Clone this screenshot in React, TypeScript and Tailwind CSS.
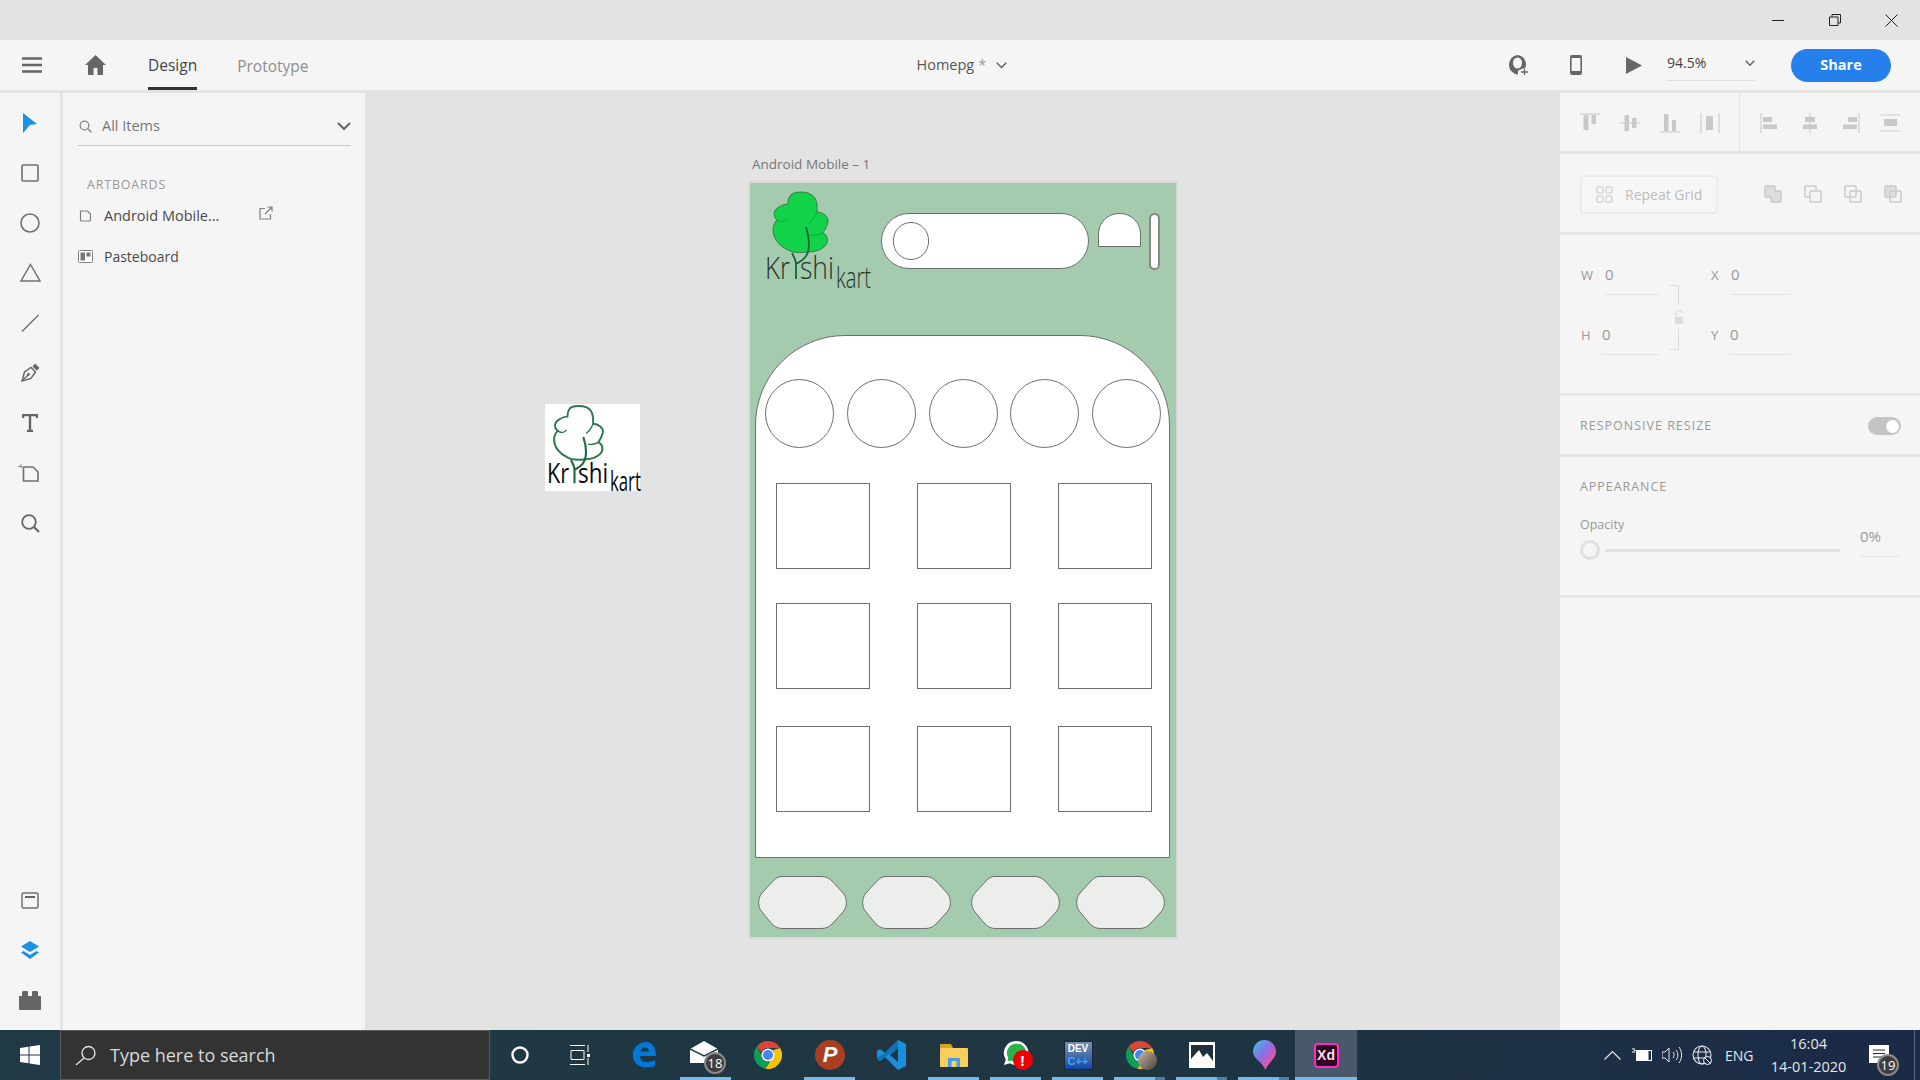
import type { ReactNode } from 'react'

function Logo({ filled, className }: { filled: boolean; className: string }) {
  const fill = filled ? '#12d24a' : '#ffffff'
  const stroke = filled ? '#2f6b3c' : '#2c7a4e'
  const ink = filled ? '#26352b' : '#0b0b0b'
  return (
    <svg viewBox="0 0 106 97" className={`overflow-visible ${className}`}>
      <path
        d="M25 4C27-1 44-2 49 5C53 10 52 16 52 20C58 20 64 25 63 30C62 34 60 38 58 41C63 43 64 50 60 54C55 59 48 60 43 60C36 61 28 61 23 58C14 54 8 46 8 38C8 33 10 30 12 28C7 24 9 17 14 15C17 13 20 12 23 12C23 9 23 7 25 4Z"
        fill={fill}
        stroke={stroke}
        strokeWidth={filled ? 0.8 : 2.2}
      />
      <path d="M12 28C16 31 20 30 22 27M52 20C50 25 47 29 44 31M58 41C54 43 50 44 46 43" fill="none" stroke={stroke} strokeWidth={filled ? 0.5 : 1.6} />
      <path d="M31 87V72C31 68 29 65 27 61M31 72C36 69 44 66 44 52C44 46 43 41 41 35" fill="none" stroke={filled ? '#12653a' : '#1e6b40'} strokeWidth={filled ? 1.8 : 2.4} />
      <text x="0" y="87" fontFamily="'Open Sans', sans-serif" fontWeight={filled ? 300 : 400} fontSize="31" fill={ink} textLength="25" lengthAdjust="spacingAndGlyphs">Kr</text>
      <text x="35" y="87" fontFamily="'Open Sans', sans-serif" fontWeight={filled ? 300 : 400} fontSize="31" fill={ink} textLength="34" lengthAdjust="spacingAndGlyphs">shi</text>
      <text x="71" y="96" fontFamily="'Open Sans', sans-serif" fontWeight={filled ? 300 : 400} fontSize="30" fill={ink} textLength="35" lengthAdjust="spacingAndGlyphs">kart</text>
    </svg>
  )
}

function Hex({ className }: { className: string }) {
  return (
    <svg viewBox="0 0 89 53" className={`w-[89px] h-[53px] overflow-visible ${className}`}>
      <path
        d="M24 .5H63C68 .5 71 2 74 5L85 17C89.5 22 89.5 31 85 36L74 48C71 51 68 52.5 63 52.5H25C20 52.5 17 51 14 48L4 36C-.5 31-.5 22 4 17L15 5C18 2 20 .5 24 .5Z"
        fill="#eceeec"
        stroke="#6e6e6e"
        strokeWidth="1"
      />
    </svg>
  )
}

function Artboard() {
  return (
    <div className="absolute left-[385px] top-[90px] w-[426px] h-[754px] bg-[#a5cbae] shadow-[0_0_0_2px_#d9d9d9]">
      <Logo filled className="absolute left-[15px] top-[9px] w-[106px] h-[97px]" />
      <div className="flex items-start pl-[131px] pt-[30px]">
        <div className="w-[208px] h-[56px] rounded-full bg-white border border-[#6e6e6e] flex items-center pl-[11px]">
          <div className="w-[36px] h-[38px] rounded-full border border-[#6e6e6e]" />
        </div>
        <div className="ml-[9px] w-[43px] h-[34px] rounded-t-[21px] bg-white border border-[#6e6e6e]" />
        <div className="ml-[8px] w-[11px] h-[57px] rounded-full bg-white border-2 border-[#888]" />
      </div>
      <div className="ml-[5px] mt-[65px] w-[415px] h-[523px] bg-white border border-[#6e6e6e] rounded-t-[90px] pt-[43px]">
        <div className="flex justify-between pl-[9px] pr-[8px]">
          <div className="w-[69px] h-[69px] rounded-full border border-[#6e6e6e]" />
          <div className="w-[69px] h-[69px] rounded-full border border-[#6e6e6e]" />
          <div className="w-[69px] h-[69px] rounded-full border border-[#6e6e6e]" />
          <div className="w-[69px] h-[69px] rounded-full border border-[#6e6e6e]" />
          <div className="w-[69px] h-[69px] rounded-full border border-[#6e6e6e]" />
        </div>
        <div className="grid grid-cols-[94px_94px_94px] gap-x-[47px] gap-y-[34px] ml-[20px] mt-[35px]">
          {Array.from({ length: 9 }).map((_, i) => (
            <div key={i} className={`h-[86px] border border-[#6e6e6e] ${i >= 6 ? 'mt-[3px]' : ''}`} />
          ))}
        </div>
      </div>
      <div className="flex pt-[18px] pl-[8px]">
        <Hex className="" />
        <Hex className="ml-[15px]" />
        <Hex className="ml-[20px]" />
        <Hex className="ml-[16px]" />
      </div>
    </div>
  )
}

function ToolIcon({ children }: { children: ReactNode }) {
  return <div className="h-[50px] flex items-center justify-center">{children}</div>
}

function LeftToolbar() {
  return (
    <div className="w-[63px] shrink-0 border-r-[3px] border-[#e3e3e3] bg-[#f5f5f5] flex flex-col justify-between pt-[5px] pb-[5px]">
      <div>
        <ToolIcon>
          <svg width="16" height="20" viewBox="0 0 16 20"><path d="M1 0L15 11L8 12L1 20Z" fill="#1a90e8" /></svg>
        </ToolIcon>
        <ToolIcon>
          <svg width="18" height="18" viewBox="0 0 18 18"><rect x="1" y="1" width="16" height="16" rx="1" fill="none" stroke="#707070" strokeWidth="1.6" /></svg>
        </ToolIcon>
        <ToolIcon>
          <svg width="20" height="20" viewBox="0 0 20 20"><circle cx="10" cy="10" r="9" fill="none" stroke="#707070" strokeWidth="1.6" /></svg>
        </ToolIcon>
        <ToolIcon>
          <svg width="21" height="19" viewBox="0 0 21 19" className="-mt-[1px]"><path d="M10.5 1.5L20 18H1Z" fill="none" stroke="#707070" strokeWidth="1.5" /></svg>
        </ToolIcon>
        <ToolIcon>
          <svg width="18" height="18" viewBox="0 0 18 18"><path d="M1 17.5L17.5 1" fill="none" stroke="#707070" strokeWidth="1.4" /></svg>
        </ToolIcon>
        <ToolIcon>
          <svg width="19" height="19" viewBox="0 0 19 19" className="-mt-[1px]">
            <path d="M1 18L3.5 9L10 4.5L14.5 9L10 15.5Z" fill="none" stroke="#666" strokeWidth="1.4" />
            <path d="M1.5 17.5L7 12" fill="none" stroke="#666" strokeWidth="1.2" />
            <path d="M11.5 3.5L14 0.5L18.5 5L15.5 7.5Z" fill="#666" />
            <circle cx="7.5" cy="11.5" r="1.4" fill="#666" />
          </svg>
        </ToolIcon>
        <ToolIcon>
          <svg width="16" height="18" viewBox="0 0 16 18"><path d="M1 4V1H15V4M8 1V17M5 17H11" fill="none" stroke="#666" strokeWidth="2.4" /></svg>
        </ToolIcon>
        <ToolIcon>
          <svg width="21" height="18" viewBox="0 0 21 18" className="-ml-[4px]">
            <path d="M0 2.5H4M3 0V4" fill="none" stroke="#888" strokeWidth="1" />
            <path d="M5.5 3H15L20 8V17H5.5Z" fill="none" stroke="#707070" strokeWidth="1.6" />
          </svg>
        </ToolIcon>
        <ToolIcon>
          <svg width="19" height="19" viewBox="0 0 19 19">
            <circle cx="8" cy="8" r="6.8" fill="none" stroke="#666" strokeWidth="1.8" />
            <path d="M13 13L18 18" stroke="#666" strokeWidth="2.2" />
          </svg>
        </ToolIcon>
      </div>
      <div>
        <ToolIcon>
          <svg width="18" height="17" viewBox="0 0 18 17">
            <rect x="1" y="1" width="16" height="15" rx="1.5" fill="none" stroke="#707070" strokeWidth="1.5" />
            <rect x="4" y="4" width="10" height="2" fill="#666" />
          </svg>
        </ToolIcon>
        <ToolIcon>
          <svg width="18" height="18" viewBox="0 0 18 18">
            <path d="M9 0L18 5.5L9 11L0 5.5Z" fill="#1a90e8" />
            <path d="M2.5 10L9 14L15.5 10L18 11.5L9 18L0 11.5Z" fill="#1a90e8" />
          </svg>
        </ToolIcon>
        <ToolIcon>
          <svg width="22" height="19" viewBox="0 0 22 19">
            <path d="M3 5V1.5C3 .7 3.7 0 4.5 0H8C8.8 0 9 .7 9 1.5V5H13V1.5C13 .7 13.5 0 14 0H17.5C18.3 0 19 .7 19 1.5V5H21C21.6 5 22 5.4 22 6V18C22 18.6 21.6 19 21 19H1C.4 19 0 18.6 0 18V6C0 5.4 .4 5 1 5Z" fill="#666" />
          </svg>
        </ToolIcon>
      </div>
    </div>
  )
}

function LeftPanel() {
  return (
    <div className="w-[302px] shrink-0 bg-[#f5f5f5] pl-[15px] pr-[14px]">
      <div className="mt-[15px] h-[38px] border-b border-[#c8c8c8] flex items-center">
        <svg width="13" height="13" viewBox="0 0 13 13" className="ml-[1px]">
          <circle cx="5.5" cy="5.5" r="4.3" fill="none" stroke="#8a8a8a" strokeWidth="1.3" />
          <path d="M8.8 8.8L12.3 12.3" stroke="#8a8a8a" strokeWidth="1.6" />
        </svg>
        <span className="ml-[10px] -mt-[2px] text-[14.5px] text-[#777]">All Items</span>
        <svg width="14" height="9" viewBox="0 0 14 9" className="ml-auto">
          <path d="M1 1L7 7L13 1" fill="none" stroke="#666" strokeWidth="2" />
        </svg>
      </div>
      <div className="mt-[31px] pl-[9px] h-[16px] leading-[16px] text-[12.5px] tracking-[0.8px] text-[#9a9a9a]">ARTBOARDS</div>
      <div className="mt-[13px] h-[20px] flex items-center">
        <svg width="13" height="12" viewBox="0 0 13 12" className="ml-[1px]">
          <path d="M1.5 1H8.5L11.5 4V10A1 1 0 0 1 10.5 11H2.5A1 1 0 0 1 1.5 10Z" fill="none" stroke="#808080" strokeWidth="1.2" />
        </svg>
        <span className="ml-[12px] text-[14.5px] text-[#4a4a4a] w-[155px]">Android Mobile...</span>
        <svg width="14" height="14" viewBox="0 0 14 14" className="-mt-[6px]">
          <path d="M6 2.5H1V13H11.5V8M6 8L13 1M8.5 1H13V5.5" fill="none" stroke="#808080" strokeWidth="1.2" />
        </svg>
      </div>
      <div className="mt-[20px] h-[20px] flex items-center">
        <svg width="15" height="13" viewBox="0 0 15 13">
          <rect x=".5" y=".5" width="14" height="12" rx="1" fill="#fff" stroke="#808080" />
          <rect x="2.5" y="2.5" width="4.5" height="8" fill="#777" />
          <rect x="8.5" y="2.5" width="4" height="4" fill="#777" />
        </svg>
        <span className="ml-[11px] text-[14px] text-[#4a4a4a]">Pasteboard</span>
      </div>
    </div>
  )
}

function AlignIcon({ d, bars }: { d: string; bars: string }) {
  return (
    <svg width="20" height="20" viewBox="0 0 20 20">
      <path d={d} fill="none" stroke="#cfcfcf" strokeWidth="1.2" />
      <path d={bars} fill="#c9c9c9" />
    </svg>
  )
}

function BoolIcon({ mode }: { mode: number }) {
  return (
    <svg width="18" height="18" viewBox="0 0 18 18">
      {mode === 0 ? (
        <path d="M2 1H10A1 1 0 0 1 11 2V6H16A1 1 0 0 1 17 7V16A1 1 0 0 1 16 17H8A1 1 0 0 1 7 16V12H2A1 1 0 0 1 1 11V2A1 1 0 0 1 2 1Z" fill="#dedede" stroke="#cacaca" strokeWidth="1.5" />
      ) : (
        <g fill="none" stroke="#cacaca" strokeWidth="1.5">
          <rect x="1" y="1" width="11" height="11" rx="1" fill={mode === 3 ? '#dedede' : 'none'} />
          <rect x="6" y="6" width="11" height="11" rx="1" fill={mode === 1 ? '#f5f5f5' : 'none'} />
        </g>
      )}
    </svg>
  )
}

function Field({ label, labelWidth, value, width }: { label: string; labelWidth: string; value: string; width: string }) {
  return (
    <div className="flex h-[33px]">
      <span className={`${labelWidth} text-[13px] text-[#999] leading-[26px]`}>{label}</span>
      <span className={`${width} border-b border-[#e3e3e3] text-[15px] text-[#999] leading-[24px]`}>{value}</span>
    </div>
  )
}

function RightPanel() {
  return (
    <div className="w-[360px] shrink-0 bg-[#f5f5f5]">
      <div className="h-[61px] border-b-[3px] border-[#e6e6e6] flex">
        <div className="w-[180px] h-full border-r border-[#e3e3e3] pl-[20px] pt-[1px] flex items-center gap-[20px]">
          <AlignIcon d="M0 1H20" bars="M3.5 2H8.5V17H3.5ZM11.5 2H16V11H11.5Z" />
          <AlignIcon d="M0 10H20" bars="M4.5 2H9V18H4.5ZM12 5H16.5V15H12Z" />
          <AlignIcon d="M0 19H20" bars="M4 1H8.5V18H4ZM12 7H16V18H12Z" />
          <AlignIcon d="M1 0V20M19 0V20" bars="M6 3H13V17H6Z" />
        </div>
        <div className="pl-[20px] pt-[1px] flex items-center gap-[20px]">
          <AlignIcon d="M1 0V20" bars="M3 4H12V9H3ZM3 11.5H17V16H3Z" />
          <AlignIcon d="M10 0V20" bars="M5 4H15V9H5ZM3 11.5H17V16H3Z" />
          <AlignIcon d="M19 0V20" bars="M8 4H17V9H8ZM3 11.5H17V16H3Z" />
          <AlignIcon d="M0 2H20M0 18H20" bars="M4 6H17V13H4Z" />
        </div>
      </div>
      <div className="h-[81px] border-b-[3px] border-[#e6e6e6] flex items-center pl-[20px] pt-[2px]">
        <div className="w-[138px] h-[39px] rounded-[4px] border-2 border-[#ececec] bg-[#f7f7f7] flex items-center pl-[14px]">
          <svg width="17" height="17" viewBox="0 0 17 17">
            <g fill="none" stroke="#d6d6d6" strokeWidth="1.5">
              <rect x="1" y="1" width="6" height="6" rx="1" />
              <rect x="10" y="1" width="6" height="6" rx="1" />
              <rect x="1" y="10" width="6" height="6" rx="1" />
              <rect x="10" y="10" width="6" height="6" rx="1" />
            </g>
          </svg>
          <span className="ml-[12px] text-[14px] text-[#bcbcbc]">Repeat Grid</span>
        </div>
        <div className="ml-[46px] flex gap-[22px]">
          <BoolIcon mode={0} />
          <BoolIcon mode={1} />
          <BoolIcon mode={2} />
          <BoolIcon mode={3} />
        </div>
      </div>
      <div className="h-[161px] border-b-[3px] border-[#e6e6e6] pl-[21px] pt-[27px] flex">
        <div className="w-[79px] flex flex-col gap-[27px]">
          <Field label="W" labelWidth="w-[24px]" value="0" width="w-[55px]" />
          <Field label="H" labelWidth="w-[21px]" value="0" width="w-[58px]" />
        </div>
        <svg width="20" height="66" viewBox="0 0 20 66" className="ml-[8px] mt-[23px]">
          <path d="M1 .5H10.5V20M10.500 44V64.5H1" fill="none" stroke="#dcdcdc" strokeWidth="1.2" />
          <path d="M8 32V29A3 3 0 0 1 14 28" fill="none" stroke="#dcdcdc" strokeWidth="1.2" />
          <rect x="7" y="32" width="8" height="7" rx="1" fill="#dcdcdc" />
        </svg>
        <div className="ml-[23px] flex flex-col gap-[27px]">
          <Field label="X" labelWidth="w-[20px]" value="0" width="w-[59px]" />
          <Field label="Y" labelWidth="w-[19px]" value="0" width="w-[60px]" />
        </div>
      </div>
      <div className="h-[61px] border-b-[3px] border-[#e6e6e6] flex items-center justify-between pl-[20px] pr-[19px] pt-[2px]">
        <span className="text-[12.5px] tracking-[1px] text-[#999]">RESPONSIVE RESIZE</span>
        <div className="w-[33px] h-[18px] rounded-full bg-[#c4c4c4] flex items-center justify-end pr-[2px]">
          <div className="w-[13px] h-[13px] rounded-full bg-white" />
        </div>
      </div>
      <div className="h-[141px] border-b-[3px] border-[#e6e6e6] pl-[20px] pt-[22px]">
        <div className="h-[16px] leading-[16px] text-[12.5px] tracking-[0.95px] text-[#999]">APPEARANCE</div>
        <div className="flex mt-[22px]">
          <div className="w-[260px]">
            <div className="h-[16px] leading-[16px] text-[12.5px] text-[#999]">Opacity</div>
            <div className="mt-[7px] flex items-center">
              <div className="w-[20px] h-[20px] rounded-full border-[3px] border-[#e0e0e0]" />
              <div className="ml-[5px] w-[235px] h-[3px] bg-[#e0e0e0]" />
            </div>
          </div>
          <div className="ml-[20px] mt-[9px] w-[40px] h-[31px] border-b border-[#e6e6e6] text-[15px] leading-[20px] text-[#999]">0%</div>
        </div>
      </div>
    </div>
  )
}

function Chrome() {
  return (
    <svg width="28" height="28" viewBox="0 0 28 28">
      <path d="M14 0A14 14 0 0 1 26.1 7H14A7 7 0 0 0 7.5 11.5L2.8 5.5A14 14 0 0 1 14 0Z" fill="#db4437" />
      <path d="M2.8 5.5L8 14.5A7 7 0 0 0 15 21L11.5 27.8A14 14 0 0 1 2.8 5.5Z" fill="#0f9d58" />
      <path d="M26.1 7A14 14 0 0 1 11.5 27.8L18.5 16A7 7 0 0 0 19 9Z" fill="#f4c20d" />
      <circle cx="14" cy="14" r="6.5" fill="#fff" />
      <circle cx="14" cy="14" r="5" fill="#4285f4" />
    </svg>
  )
}

function Slot({ children, bar, stacked, active }: { children: ReactNode; bar?: boolean; stacked?: boolean; active?: boolean }) {
  return (
    <div className={`relative w-[62px] h-[50px] flex items-center justify-center ${active ? 'bg-[#47596a]' : ''}`}>
      {children}
      {bar && <div className={`absolute bottom-0 h-[3px] bg-[#76b9ed] ${active ? 'left-0 w-[62px]' : stacked ? 'left-[5px] w-[41px]' : 'left-[5px] w-[51px]'}`} />}
      {stacked && <div className="absolute bottom-0 left-[46px] w-[10px] h-[3px] bg-[#4c7fa8]" />}
    </div>
  )
}

function Taskbar() {
  return (
    <div className="h-[50px] shrink-0 flex items-center bg-gradient-to-r from-[#203a45] via-[#1f3542] via-60% to-[#1b2a47] text-white">
      <div className="w-[60px] h-full flex items-center justify-center">
        <svg width="20" height="20" viewBox="0 0 20 20" className="-ml-[1px]">
          <path d="M0 3L8.5 1.8V9.5H0ZM9.5 1.6L20 0V9.5H9.5ZM0 10.5H8.5V18.2L0 17ZM9.5 10.5H20V20L9.5 18.4Z" fill="#fff" />
        </svg>
      </div>
      <div className="w-[430px] h-full bg-[#333333] border border-[#5a5a5a] flex items-center pl-[14px]">
        <svg width="22" height="20" viewBox="0 0 22 20">
          <circle cx="13.5" cy="8" r="6.5" fill="none" stroke="#e6e6e6" strokeWidth="1.3" />
          <path d="M9 13L1 20" stroke="#e6e6e6" strokeWidth="1.3" />
        </svg>
        <span className="ml-[13px] text-[18px] text-[#d9d9d9]">Type here to search</span>
      </div>
      <div className="w-[60px] flex justify-center">
        <svg width="18" height="18" viewBox="0 0 18 18"><circle cx="9" cy="9" r="7.5" fill="none" stroke="#fff" strokeWidth="2.4" /></svg>
      </div>
      <div className="w-[60px] flex justify-center mr-[3px]">
        <svg width="20" height="20" viewBox="0 0 20 20">
          <path d="M0 .5H15M0 19.5H15M1 5.5H14V14.5H1ZM18 0V7M18 13V20" fill="none" stroke="#fff" strokeWidth="1" />
          <rect x="17" y="9" width="3" height="3" fill="#fff" />
        </svg>
      </div>
      <Slot>
        <svg width="24" height="26" viewBox="0 0 24 26">
          <path d="M1 11C2 4 8 0 14 0C20 0 24 5 24 14H8C8 20 15 22 23 18V24C14 27 2 25 1 15C1 13 1 12 1 11ZM8.5 9.5H17C17 4 9.5 4 8.5 9.5Z" fill="#0078d7" />
        </svg>
      </Slot>
      <Slot bar>
        <div className="relative w-[32px] h-[28px]">
          <svg width="28" height="24" viewBox="0 0 28 24" className="absolute left-0 top-0">
            <path d="M0 8L14 0L28 8V22H0Z" fill="#fff" />
            <path d="M0 8L14 15L28 8" fill="none" stroke="#203a45" strokeWidth="1.5" />
          </svg>
          <div className="absolute -right-[4px] bottom-[-5px] w-[22px] h-[22px] rounded-full bg-[#3d3d3d] border-2 border-[#8a8a8a] flex items-center justify-center text-[13px] leading-none">18</div>
        </div>
      </Slot>
      <Slot><Chrome /></Slot>
      <Slot bar>
        <div className="w-[30px] h-[30px] rounded-full bg-[#a93e22] flex items-center justify-center font-['Liberation_Sans',sans-serif] italic font-bold text-[22px] leading-none text-white">P</div>
      </Slot>
      <Slot>
        <svg width="30" height="30" viewBox="0 0 30 30">
          <path d="M21 0L29 4V26L21 30L8 17L3 21L0 19V11L3 9L8 13ZM21 8L13 15L21 22Z" fill="#1c8fdc" />
          <path d="M21 0V8L3 21L0 19V18L8 13Z" fill="#0a74bb" />
        </svg>
      </Slot>
      <Slot bar>
        <svg width="28" height="23" viewBox="0 0 28 23">
          <path d="M0 1A1 1 0 0 1 1 0H11L13 4H0Z" fill="#e0a021" />
          <rect y="4" width="28" height="19" rx="1" fill="#f7cf5c" />
          <path d="M8 23V14H20V23H16.5V17H11.5V23Z" fill="#4a9be0" />
        </svg>
      </Slot>
      <Slot bar>
        <div className="relative w-[30px] h-[30px] ml-[3px]">
          <svg width="26" height="26" viewBox="0 0 28 28" className="absolute left-0 top-0">
            <path d="M14 1A13 13 0 0 0 3 21L1 27L7.5 25A13 13 0 1 0 14 1Z" fill="#fff" />
            <path d="M14 4A10 10 0 0 0 5.5 19L5 23L9 22A10 10 0 1 0 14 4Z" fill="#25b34a" />
          </svg>
          <div className="absolute right-0 bottom-0 w-[20px] h-[20px] rounded-full bg-[#f00000] flex items-center justify-center text-[15px] font-bold leading-none">!</div>
        </div>
      </Slot>
      <Slot bar>
        <div className="w-[29px] h-[29px] border border-[#1a2433] bg-gradient-to-b from-[#7b8fa8] to-[#0f48a8] flex flex-col items-center justify-center font-['Liberation_Sans',sans-serif] font-bold leading-none">
          <span className="text-[10px] text-white">DEV</span>
          <span className="text-[11px] mt-[2px] text-[#33aaff]">C++</span>
        </div>
      </Slot>
      <Slot bar stacked>
        <div className="relative w-[32px] h-[30px] flex items-center ml-[3px]">
          <Chrome />
          <div className="absolute right-[1px] bottom-0 w-[19px] h-[19px] rounded-full bg-gradient-to-br from-[#cbb9a5] to-[#4d443d]" />
        </div>
      </Slot>
      <Slot bar stacked>
        <svg width="26" height="26" viewBox="0 0 26 26">
          <rect width="26" height="26" fill="#fff" />
          <path d="M2 3H24V19L18 11L14 15L10 8L2 17Z" fill="#1f2f3c" />
        </svg>
      </Slot>
      <Slot bar stacked>
        <svg width="23" height="30" viewBox="0 0 24 38" preserveAspectRatio="none">
          <defs>
            <linearGradient id="balloon" x1="0" y1="0" x2="1" y2="1">
              <stop offset="0" stopColor="#32c8e6" />
              <stop offset="0.45" stopColor="#8c6de6" />
              <stop offset="0.8" stopColor="#f0559a" />
              <stop offset="1" stopColor="#f5a623" />
            </linearGradient>
          </defs>
          <path d="M12 0C20 0 24 8 24 15C24 24 16 28 13 38C10 28 0 24 0 15C0 8 4 0 12 0Z" fill="url(#balloon)" />
        </svg>
      </Slot>
      <Slot bar active>
        <div className="w-[25px] h-[25px] rounded-[4px] border-2 border-[#ff2bc2] bg-[#2e001f] flex items-center justify-center font-['Liberation_Sans',sans-serif] text-[14px] font-bold leading-none text-[#ffd9f2]">Xd</div>
      </Slot>
      <div className="ml-auto flex items-center h-full">
        <svg width="17" height="10" viewBox="0 0 17 10"><path d="M.5 9.5L8.5 1.5L16.5 9.5" fill="none" stroke="#e6e6e6" strokeWidth="1.2" /></svg>
        <svg width="20" height="14" viewBox="0 0 20 14" className="ml-[11px]">
          <path d="M0 1H3M0 4H3M2 2.5H4" stroke="#fff" strokeWidth="1" />
          <rect x="4.5" y="2.5" width="15" height="10" fill="none" stroke="#fff" />
          <rect x="4.5" y="2.5" width="12" height="10" fill="#fff" />
        </svg>
        <svg width="20" height="18" viewBox="0 0 20 18" className="ml-[10px]">
          <path d="M0 6H3L7 2V16L3 12H0ZM11 6C12.5 8 12.5 10 11 12M14 4C16.5 7 16.5 11 14 14M17 1C20.5 6 20.5 12 17 17" fill="none" stroke="#e6e6e6" strokeWidth="1" />
        </svg>
        <svg width="20" height="20" viewBox="0 0 20 20" className="ml-[10px]">
          <g fill="none" stroke="#e6e6e6" strokeWidth="1.1">
            <circle cx="10" cy="10" r="9" />
            <ellipse cx="10" cy="10" rx="4" ry="9" />
            <path d="M1.5 7H18.5M1.5 13H18.5" />
          </g>
          <circle cx="15.5" cy="15.5" r="4" fill="#1b2a47" stroke="#fff" />
          <path d="M13 13L18 18" stroke="#fff" />
        </svg>
        <span className="ml-[13px] w-[28px] text-[14px] text-[#e6e6e6]">ENG</span>
        <div className="ml-[18px] w-[75px] whitespace-nowrap flex flex-col items-center text-[14.5px] leading-[23px] text-[#e6e6e6]">
          <div>16:04</div>
          <div>14-01-2020</div>
        </div>
        <div className="ml-[23px] w-[20px] h-[26px] relative">
          <svg width="20" height="18" viewBox="0 0 20 18" className="absolute top-[3px] left-0">
            <path d="M0 0H20V18H0Z" fill="#fff" />
            <path d="M4 5H16M4 8.5H16M4 12H13" stroke="#1b2a47" strokeWidth="1" />
          </svg>
          <div className="absolute left-[8px] top-[12px] w-[22px] h-[22px] rounded-full bg-[#3d3d3d] border-2 border-[#8a8a8a] flex items-center justify-center text-[13px] leading-none">19</div>
        </div>
        <div className="ml-[25px] mr-[5px] w-[1px] h-full bg-[#5a6a80]" />
      </div>
    </div>
  )
}

export default function App() {
  return (
    <div className="w-[1920px] h-[1080px] overflow-hidden flex flex-col bg-[#e3e3e3] font-['Open_Sans',sans-serif]">
      <div className="h-[40px] shrink-0 flex justify-end items-center">
        <div className="w-[57px] flex justify-center">
          <div className="w-[12px] h-[1px] bg-[#222]" />
        </div>
        <div className="w-[57px] flex justify-center">
          <svg width="12" height="12" viewBox="0 0 12 12"><path d="M.5 3H9V11.5H.5ZM3 3V.5H11.5V9H9" fill="none" stroke="#222" strokeWidth="1" /></svg>
        </div>
        <div className="w-[57px] flex justify-center">
          <svg width="13" height="13" viewBox="0 0 13 13"><path d="M.5 .5L12.5 12.5M12.5 .5L.5 12.5" stroke="#222" strokeWidth="1" /></svg>
        </div>
      </div>
      <div className="h-[50px] shrink-0 bg-[#f5f5f5] flex items-center">
        <svg width="20" height="16" viewBox="0 0 20 16" className="ml-[22px]">
          <path d="M0 1.5H20M0 8H20M0 14.5H20" stroke="#666" strokeWidth="2.4" />
        </svg>
        <svg width="21" height="20" viewBox="0 0 21 20" className="ml-[43px]">
          <path d="M10.5 0L21 10H18V20H12.5V13H8.5V20H3V10H0Z" fill="#666" />
        </svg>
        <div className="ml-[42px] h-full flex items-center border-b-[3px] border-[#333] text-[15.5px] text-[#444] pt-[5px]">Design</div>
        <div className="ml-[40px] pt-[3px] text-[15.5px] text-[#8e8e8e]">Prototype</div>
        <div className="ml-[608px] flex items-center text-[14.5px] text-[#555]">
          <span>Homepg</span>
          <span className="ml-[4px] text-[#999]">*</span>
          <svg width="11" height="7" viewBox="0 0 11 7" className="ml-[10px]"><path d="M.7 .7L5.5 5.5L10.3 .7" fill="none" stroke="#666" strokeWidth="1.5" /></svg>
        </div>
        <div className="flex-1 flex items-center justify-end pr-[29px]">
          <svg width="21" height="20" viewBox="0 0 21 20">
            <path d="M9.5 0A9.500 9.500 0 0 1 17.5 12.5L14 14A8 8 0 0 0 10 16V19.5A9.8 9.8 0 0 1 9.5 0Z" fill="#666" />
            <ellipse cx="9.5" cy="8" rx="4.5" ry="5.5" fill="#f5f5f5" />
            <path d="M13 17H20M16.5 13.5V20.5" stroke="#666" strokeWidth="1.3" />
          </svg>
          <svg width="12" height="20" viewBox="0 0 12 20" className="ml-[41px]">
            <rect x=".8" y=".8" width="10.4" height="18.4" rx="1.5" fill="none" stroke="#666" strokeWidth="1.6" />
            <rect x="1" y="1" width="10" height="2" fill="#666" />
            <rect x="1" y="16" width="10" height="3" fill="#666" />
          </svg>
          <svg width="16" height="17" viewBox="0 0 16 17" className="ml-[44px]"><path d="M0 0L16 8.5L0 17Z" fill="#666" /></svg>
          <div className="ml-[25px] w-[88px] h-[32px] border-b border-[#e0e0e0] flex items-start justify-between pt-[3px] text-[14px] text-[#444]">
            <span>94.5%</span>
            <svg width="10" height="7" viewBox="0 0 10 7" className="mt-[8px]"><path d="M.7 .7L5 5.2L9.3 .7" fill="none" stroke="#666" strokeWidth="1.5" /></svg>
          </div>
          <div className="ml-[36px] w-[100px] h-[33px] rounded-full bg-[#2680eb] flex items-center justify-center text-[14.5px] font-bold text-white">Share</div>
        </div>
      </div>
      <div className="h-[940px] shrink-0 pt-[3px] flex">
        <LeftToolbar />
        <LeftPanel />
        <div className="relative flex-1 bg-[#e3e3e3]">
          <span className="absolute left-[387px] top-[61px] text-[13.5px] text-[#777]">Android Mobile – 1</span>
          <div className="absolute left-[180px] top-[311px] w-[95px] h-[87px] bg-white" />
          <Logo filled={false} className="absolute left-[182px] top-[313px] w-[94px] h-[86px]" />
          <Artboard />
        </div>
        <RightPanel />
      </div>
      <Taskbar />
    </div>
  )
}
